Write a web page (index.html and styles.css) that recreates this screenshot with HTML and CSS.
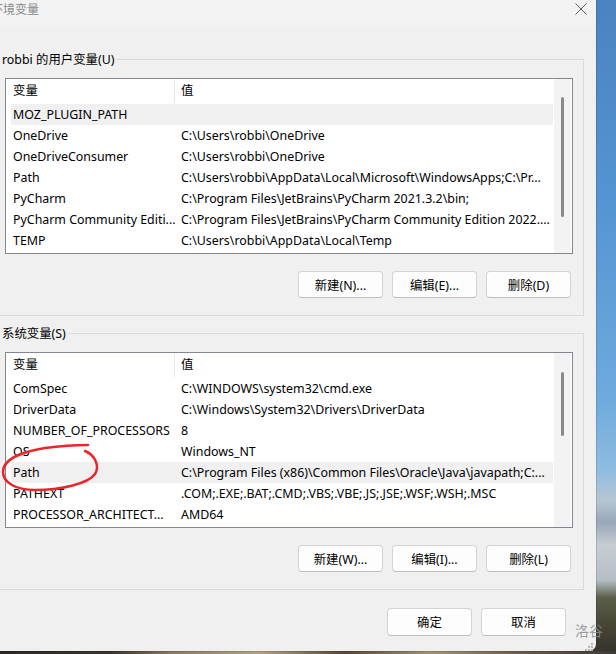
FILE: index.html
```html
<!DOCTYPE html>
<html lang="zh-CN">
<head>
<meta charset="utf-8">
<title>环境变量</title>
<link rel="stylesheet" href="styles.css">
</head>
<body>
<div class="desktop">
  <div class="dialog">
    <div class="titlebar">
      <span class="title">环境变量</span>
      <svg class="close" width="12" height="12" viewBox="0 0 12 12"><path d="M0.5 0.5L11.5 11.5M11.5 0.5L0.5 11.5" stroke="#5f5f5f" stroke-width="1" fill="none"/></svg>
    </div>
    <div class="content">
      <div class="group">
        <span class="legend">robbi 的用户变量(U)</span>
        <div class="list">
          <div class="list-main">
            <div class="row head"><span>变量</span><span>值</span></div>
            <div class="row sel"><span>MOZ_PLUGIN_PATH</span><span></span></div>
            <div class="row"><span>OneDrive</span><span>C:\Users\robbi\OneDrive</span></div>
            <div class="row"><span>OneDriveConsumer</span><span>C:\Users\robbi\OneDrive</span></div>
            <div class="row"><span>Path</span><span>C:\Users\robbi\AppData\Local\Microsoft\WindowsApps;C:\Pr...</span></div>
            <div class="row"><span>PyCharm</span><span>C:\Program Files\JetBrains\PyCharm 2021.3.2\bin;</span></div>
            <div class="row"><span>PyCharm Community Editi...</span><span>C:\Program Files\JetBrains\PyCharm Community Edition 2022....</span></div>
            <div class="row"><span>TEMP</span><span>C:\Users\robbi\AppData\Local\Temp</span></div>
          </div>
          <div class="scroll"><div class="thumb thumb-user"></div></div>
        </div>
        <div class="buttons">
          <div class="btn">新建(N)...</div>
          <div class="btn">编辑(E)...</div>
          <div class="btn">删除(D)</div>
        </div>
      </div>
      <div class="group">
        <span class="legend">系统变量(S)</span>
        <div class="list">
          <div class="list-main">
            <div class="row head"><span>变量</span><span>值</span></div>
            <div class="row"><span>ComSpec</span><span>C:\WINDOWS\system32\cmd.exe</span></div>
            <div class="row"><span>DriverData</span><span>C:\Windows\System32\Drivers\DriverData</span></div>
            <div class="row"><span>NUMBER_OF_PROCESSORS</span><span>8</span></div>
            <div class="row"><span>OS</span><span>Windows_NT</span></div>
            <div class="row sel"><span>Path</span><span>C:\Program Files (x86)\Common Files\Oracle\Java\javapath;C:...</span></div>
            <div class="row"><span>PATHEXT</span><span>.COM;.EXE;.BAT;.CMD;.VBS;.VBE;.JS;.JSE;.WSF;.WSH;.MSC</span></div>
            <div class="row"><span>PROCESSOR_ARCHITECT...</span><span>AMD64</span></div>
          </div>
          <div class="scroll"><div class="thumb thumb-sys"></div></div>
        </div>
        <div class="buttons">
          <div class="btn">新建(W)...</div>
          <div class="btn">编辑(I)...</div>
          <div class="btn">删除(L)</div>
        </div>
      </div>
      <div class="buttons footer">
        <div class="btn">确定</div>
        <div class="btn">取消</div>
      </div>
    </div>
  </div>
  <svg class="mark" width="110" height="60" viewBox="0 0 110 60">
    <path d="M85 11 C95 15 100 26 95 34 C88 44 60 50 35 50 C15 50 3 42 3 32 C3 20 20 12 45 8 C60 6 75 5 88 5" stroke="#e8262b" stroke-width="2.5" fill="none" stroke-linecap="round"/>
  </svg>
  <div class="watermark">洛谷</div>
  <svg class="grip" width="10" height="10" viewBox="0 0 10 10">
    <g fill="#b4b4b4"><rect x="7" y="1" width="2" height="2"/><rect x="4" y="4" width="2" height="2"/><rect x="7" y="4" width="2" height="2"/><rect x="1" y="7" width="2" height="2"/><rect x="4" y="7" width="2" height="2"/><rect x="7" y="7" width="2" height="2"/></g>
  </svg>
</div>
</body>
</html>
```

FILE: styles.css
```css
* { box-sizing: border-box; }

body {
  margin: 0;
  font-family: "Noto Sans", "Noto Sans CJK SC", sans-serif;
  font-size: 12.4px;
  color: #000;
}

.desktop {
  position: relative;
  width: 616px;
  height: 654px;
  overflow: hidden;
  background:
    linear-gradient(to right, #2c2824 0%, #3b342e 18%, #8c7b5b 28%, #b8a17a 42%, #5b4733 56%, #a7916b 70%, #6b5a44 85%, #3c3a38 100%) bottom / 100% 3px no-repeat,
    linear-gradient(to bottom, #4b83c0 0px, #5494d2 200px, #6eaadd 400px, #8fbce0 470px, #b5c6d3 500px, #98a7b8 522px, #c6ccd2 545px, #b6bec6 580px, #5a5e48 598px, #4a4a38 620px, #35322a 654px);
}

.dialog {
  position: relative;
  width: 596px;
  height: 651px;
  background: #f0f0f0;
  border-bottom-right-radius: 7px;
  box-shadow: 1px 0 0 rgba(0, 0, 0, 0.12), 0 1px 0 rgba(0, 0, 0, 0.12);
  display: flex;
  flex-direction: column;
}

.titlebar {
  height: 25px;
  flex: none;
  background: #f3f3f3;
  display: flex;
  justify-content: space-between;
  align-items: flex-start;
  padding-right: 9px;
}

.title {
  margin-left: -9px;
  padding-top: 2px;
  line-height: 16px;
  font-size: 12px;
  color: #8a8a8a;
}

.close {
  margin-top: 3px;
}

.content {
  padding: 34px 12px 0 0;
}

.group {
  position: relative;
  border: 1px solid #dadada;
  border-left: none;
  padding: 18px 10px 17px 5px;
}

.group + .group {
  margin-top: 17px;
}

.legend {
  position: absolute;
  left: 0;
  top: -8px;
  padding: 0 3px 0 2px;
  line-height: 16px;
  background: #f0f0f0;
}

.list {
  height: 176px;
  border: 1px solid #828790;
  background: #fff;
  display: flex;
}

.list-main {
  flex: 1;
  min-width: 0;
  padding-left: 5px;
  overflow: hidden;
}

.scroll {
  width: 17px;
  flex: none;
  margin: 0 1px;
  background: #f3f3f3;
}

.thumb {
  width: 3px;
  margin-left: 7px;
  background: #8a8a8a;
  border-radius: 2px;
}

.thumb-user {
  margin-top: 18px;
  height: 120px;
}

.thumb-sys {
  margin-top: 19px;
  height: 64px;
}

.row {
  display: grid;
  grid-template-columns: 164px 1fr;
  height: 21px;
  line-height: 21px;
  white-space: nowrap;
}

.row span:first-child {
  padding-left: 2px;
  overflow: visible;
}

.row span:last-child {
  padding-left: 6px;
  overflow: hidden;
}

.row.head {
  height: 25px;
  line-height: 24px;
}

.row.head span:first-child {
  border-right: 1px solid #e5e5e5;
  margin: 1px 0;
  line-height: 22px;
}

.row.sel {
  background: #f0f0f0;
}

.buttons {
  display: flex;
  justify-content: flex-end;
  gap: 9px;
  margin-top: 17px;
  padding-right: 2px;
}

.btn {
  width: 85px;
  height: 27px;
  border: 1px solid #d3d3d3;
  border-bottom-color: #bdbdbd;
  border-radius: 4px;
  background: #fdfdfd;
  display: flex;
  align-items: center;
  justify-content: center;
}

.footer {
  margin-top: 18px;
  padding-right: 18px;
}

.footer .btn {
  height: 28px;
}

.mark {
  position: absolute;
  left: 0;
  top: 440px;
}

.watermark {
  position: absolute;
  left: 575px;
  top: 622px;
  font-size: 14px;
  line-height: 18px;
  color: rgba(140, 140, 140, 0.85);
}

.grip {
  position: absolute;
  left: 584px;
  top: 642px;
}
```
